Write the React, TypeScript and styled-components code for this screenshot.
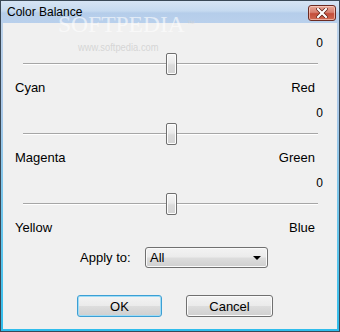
import React from "react";
import styled, { createGlobalStyle } from "styled-components";

const Global = createGlobalStyle`
  html, body { margin: 0; padding: 0; background: #000; }
  body { font-family: "Liberation Sans", Arial, sans-serif; }
  * { box-sizing: border-box; }
`;

const Window = styled.div`
  position: relative;
  width: 340px;
  height: 332px;
  border: 1px solid #3a4856;
  background: linear-gradient(to bottom, #d4e3f3 0px, #bcd2ea 22px, #a9c8e8 110px, #5cc4ec 250px, #2fbdec 100%);
  display: flex;
  flex-direction: column;
  padding: 0 2px 2px 2px;
  overflow: hidden;
`;

const TitleBar = styled.div`
  height: 22px;
  flex: none;
  display: flex;
  align-items: center;
  justify-content: space-between;
  padding: 0 3px 0 6px;
  background: linear-gradient(to bottom, #d6e4f4 0%, #c6daf0 45%, #b5cdea 55%, #b9d0ec 100%);
  margin: 0 -2px;
`;

const Title = styled.span`
  font-size: 12px;
  color: #000;
`;

const CloseButton = styled.div`
  width: 28px;
  height: 16px;
  margin-top: 2px;
  border: 1px solid #6b2a22;
  border-radius: 3px;
  background: linear-gradient(to bottom, #e8a898 0%, #d88070 45%, #c44d3a 55%, #d06a52 100%);
  display: flex;
  align-items: center;
  justify-content: center;
  box-shadow: inset 0 0 0 1px rgba(255, 220, 210, 0.6);
`;

const Content = styled.div`
  flex: 1;
  background: #f0f0f0;
  display: flex;
  flex-direction: column;
  padding-top: 13px;
`;

const Group = styled.div`
  display: flex;
  flex-direction: column;
  margin-bottom: 11px;
`;

const ValueRow = styled.div`
  height: 15px;
  line-height: 15px;
  font-size: 12px;
  text-align: right;
  padding-right: 14px;
  color: #000;
`;

const SliderRow = styled.div`
  position: relative;
  height: 26px;
  margin: 0 19px 0 20px;
  display: flex;
  align-items: center;
`;

const Track = styled.div`
  width: 100%;
  height: 2px;
  border-top: 1px solid #a6a6a6;
  border-bottom: 1px solid #ffffff;
  background: #e3e3e3;
`;

const Thumb = styled.div`
  position: absolute;
  top: 2px;
  width: 11px;
  height: 22px;
  border: 1px solid #6f6f6f;
  border-radius: 2px;
  background: linear-gradient(to bottom, #f6f6f6 0%, #eaeaea 45%, #dbdbdb 55%, #d4d4d4 100%);
  box-shadow: inset 0 0 0 1px #fdfdfd;
`;

const LabelsRow = styled.div`
  margin-top: 3px;
  height: 15px;
  line-height: 15px;
  font-size: 13px;
  display: flex;
  justify-content: space-between;
  padding: 0 22px 0 12px;
  color: #000;
`;

const ApplyRow = styled.div`
  margin-top: 1px;
  display: flex;
  align-items: center;
  height: 21px;
  padding-left: 77px;
`;

const ApplyLabel = styled.span`
  width: 65px;
  font-size: 13px;
  color: #000;
`;

const Combo = styled.div`
  width: 123px;
  height: 21px;
  border: 1px solid #707070;
  border-radius: 3px;
  background: linear-gradient(to bottom, #f3f3f3 0%, #ebebeb 48%, #dddddd 52%, #cfcfcf 100%);
  box-shadow: inset 0 0 0 1px #fafafa;
  display: flex;
  align-items: center;
  justify-content: space-between;
  padding: 0 6px 0 4px;
  font-size: 13px;
  color: #000;
`;

const Arrow = styled.span`
  width: 0;
  height: 0;
  border-left: 4px solid transparent;
  border-right: 4px solid transparent;
  border-top: 4px solid #000;
`;

const ButtonRow = styled.div`
  margin-top: 27px;
  display: flex;
  gap: 24px;
  padding-left: 74px;
`;

const Button = styled.div<{ $default?: boolean }>`
  width: ${(p) => (p.$default ? 85 : 87)}px;
  height: 22px;
  border: 1px solid ${(p) => (p.$default ? "#3c9fd4" : "#707070")};
  border-radius: 3px;
  background: linear-gradient(to bottom, #f3f3f3 0%, #ebebeb 48%, #dddddd 52%, #cfcfcf 100%);
  box-shadow: inset 0 0 0 1px ${(p) => (p.$default ? "#9fdcf6" : "#fbfbfb")};
  display: flex;
  align-items: center;
  justify-content: center;
  font-size: 13px;
  color: #000;
`;

const Watermark = styled.div`
  position: absolute;
  left: 57px;
  top: 11px;
  font-family: "Liberation Serif", serif;
  font-size: 24px;
  line-height: 24px;
  color: rgba(255, 255, 255, 0.6);
  pointer-events: none;
  transform: scaleX(0.98);
  transform-origin: left top;
  white-space: nowrap;
`;

const Tm = styled.span`
  font-family: "Liberation Sans", sans-serif;
  font-size: 8px;
  vertical-align: top;
  margin-left: 2px;
  color: rgba(210, 210, 210, 0.7);
`;

const WatermarkUrl = styled.div`
  position: absolute;
  left: 77px;
  top: 40px;
  font-size: 11px;
  color: rgba(195, 195, 195, 0.6);
  pointer-events: none;
  transform: scaleX(0.85);
  transform-origin: left;
  white-space: nowrap;
`;

const sliders = [
  { left: "Cyan", right: "Red", value: 0 },
  { left: "Magenta", right: "Green", value: 0 },
  { left: "Yellow", right: "Blue", value: 0 },
];

export default function App() {
  return (
    <>
      <Global />
      <Window>
        <TitleBar>
          <Title>Color Balance</Title>
          <CloseButton>
            <svg width="12" height="10" viewBox="0 0 12 10">
              <path
                d="M2 1 L10 9 M10 1 L2 9"
                stroke="#5a1a10"
                strokeWidth="3.6"
                strokeLinecap="square"
              />
              <path
                d="M2 1 L10 9 M10 1 L2 9"
                stroke="#ffffff"
                strokeWidth="2.2"
                strokeLinecap="square"
              />
            </svg>
          </CloseButton>
        </TitleBar>
        <Content>
          {sliders.map((s) => (
            <Group key={s.left}>
              <ValueRow>{s.value}</ValueRow>
              <SliderRow>
                <Track />
                <Thumb style={{ left: "50%", marginLeft: -5 }} />
              </SliderRow>
              <LabelsRow>
                <span>{s.left}</span>
                <span>{s.right}</span>
              </LabelsRow>
            </Group>
          ))}
          <ApplyRow>
            <ApplyLabel>Apply to:</ApplyLabel>
            <Combo>
              <span>All</span>
              <Arrow />
            </Combo>
          </ApplyRow>
          <ButtonRow>
            <Button $default>OK</Button>
            <Button>Cancel</Button>
          </ButtonRow>
        </Content>
        <Watermark>
          SOFTPEDIA<Tm>™</Tm>
        </Watermark>
        <WatermarkUrl>www.softpedia.com</WatermarkUrl>
      </Window>
    </>
  );
}
